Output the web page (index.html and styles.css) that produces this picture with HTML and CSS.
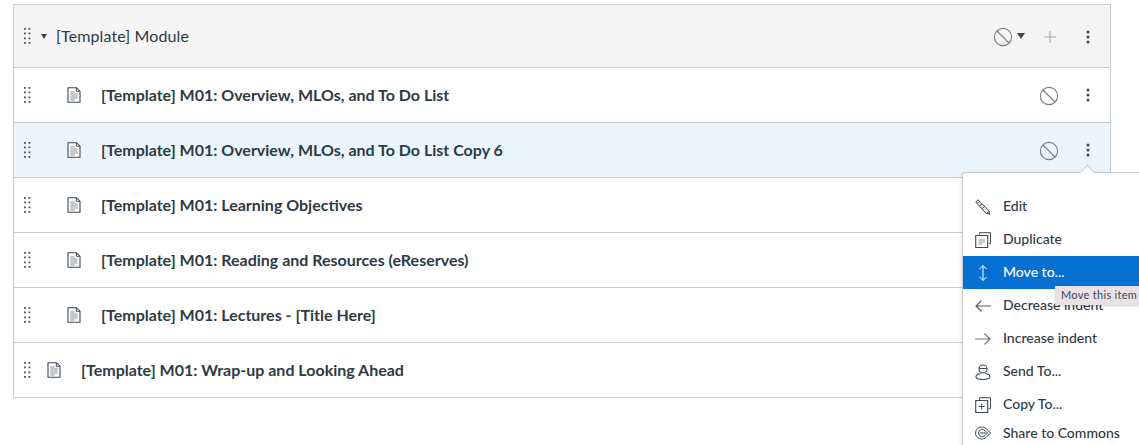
FILE: index.html
```html
<!doctype html>
<html lang="en">
  <head>
    <meta charset="UTF-8" />
    <title>Modules</title>
    <link rel="stylesheet" href="styles.css">
  </head>
  <body>
    <svg class="icon-defs" width="0" height="0">
      <symbol id="i-grip" viewBox="0 0 10 18">
        <g fill="#4a5660">
          <rect x="1" y="1" width="1.8" height="1.8"/><rect x="5.500" y="1" width="1.800" height="1.800"/>
          <rect x="1" y="5.500" width="1.800" height="1.800"/><rect x="5.500" y="5.500" width="1.800" height="1.800"/>
          <rect x="1" y="10.500" width="1.800" height="1.800"/><rect x="5.500" y="10.500" width="1.800" height="1.800"/>
          <rect x="1" y="15" width="1.800" height="1.800"/><rect x="5.500" y="15" width="1.800" height="1.800"/>
        </g>
      </symbol>
      <symbol id="i-page" viewBox="0 0 14 16">
        <path d="M1 .7h8.500L13 4.200v11.100H1z" fill="#fff" stroke="#3d4850" stroke-width="1.100"/>
        <path d="M9.300.9v3.400h3.500" fill="none" stroke="#3d4850"/>
        <path d="M3.200 5h4.500M3.200 7h7.500M3.200 9h7.500M3.200 11h7.500M3.200 13h4.500" stroke="#8a949b" stroke-width="1.100"/>
      </symbol>
      <symbol id="i-off" viewBox="0 0 20 20">
        <circle cx="10" cy="10" r="8.600" fill="none" stroke="#747d85" stroke-width="1.100"/>
        <path d="M4 4l12 12" stroke="#747d85" stroke-width="1.100"/>
      </symbol>
      <symbol id="i-kebab" viewBox="0 0 4 14">
        <circle cx="2" cy="2" r="1.500" fill="#3d4850"/><circle cx="2" cy="7" r="1.500" fill="#3d4850"/><circle cx="2" cy="12" r="1.500" fill="#3d4850"/>
      </symbol>
    </svg>

    <div class="module">
      <div class="module-header">
        <svg class="grip"><use href="#i-grip"/></svg>
        <span class="caret"></span>
        <span class="module-name">[Template] Module</span>
        <div class="header-actions">
          <svg class="off"><use href="#i-off"/></svg>
          <span class="caret caret-dark"></span>
          <svg class="plus" viewBox="0 0 12 12"><path d="M6 0v12M0 6h12" stroke="#a5acb2" stroke-width="1.200"/></svg>
          <svg class="kebab"><use href="#i-kebab"/></svg>
        </div>
      </div>

      <div class="item indent">
        <svg class="grip"><use href="#i-grip"/></svg>
        <svg class="page"><use href="#i-page"/></svg>
        <span class="title">[Template] M01: Overview, MLOs, and To Do List</span>
        <div class="item-actions">
          <svg class="off"><use href="#i-off"/></svg>
          <svg class="kebab"><use href="#i-kebab"/></svg>
        </div>
      </div>
      <div class="item indent active">
        <svg class="grip"><use href="#i-grip"/></svg>
        <svg class="page"><use href="#i-page"/></svg>
        <span class="title">[Template] M01: Overview, MLOs, and To Do List Copy 6</span>
        <div class="item-actions">
          <svg class="off"><use href="#i-off"/></svg>
          <svg class="kebab"><use href="#i-kebab"/></svg>
        </div>
      </div>
      <div class="item indent">
        <svg class="grip"><use href="#i-grip"/></svg>
        <svg class="page"><use href="#i-page"/></svg>
        <span class="title">[Template] M01: Learning Objectives</span>
      </div>
      <div class="item indent">
        <svg class="grip"><use href="#i-grip"/></svg>
        <svg class="page"><use href="#i-page"/></svg>
        <span class="title">[Template] M01: Reading and Resources (eReserves)</span>
      </div>
      <div class="item indent">
        <svg class="grip"><use href="#i-grip"/></svg>
        <svg class="page"><use href="#i-page"/></svg>
        <span class="title">[Template] M01: Lectures - [Title Here]</span>
      </div>
      <div class="item">
        <svg class="grip"><use href="#i-grip"/></svg>
        <svg class="page"><use href="#i-page"/></svg>
        <span class="title">[Template] M01: Wrap-up and Looking Ahead</span>
      </div>
    </div>

    <div class="menu">
      <a class="menu-item">
        <svg viewBox="0 0 16 16"><path d="M.8 3L3 .8l10.800 10.700.9 3.700-3.700-.9zM2.300 4.500l2.200-2.200M4.800 7l2.200-2.200M7.300 9.500l2.200-2.200" fill="#e4e7e9" stroke="#3d4850" stroke-width="1"/><path d="M12 14.200l2-2" stroke="#3d4850"/></svg>
        Edit
      </a>
      <a class="menu-item">
        <svg viewBox="0 0 16 16"><path d="M4.500 2.500V.7h11v11h-1.800" fill="none" stroke="#3d4850"/><path d="M.7 3.500h12v12H.7z" fill="#fff" stroke="#3d4850" stroke-width="1.100"/><path d="M3.500 8h6.500M3.500 10h6.500M3.500 12h4" stroke="#8a949b"/></svg>
        Duplicate
      </a>
      <a class="menu-item selected">
        <svg viewBox="0 0 16 16"><path d="M8 .5v15M4.500 4L8 .5 11.500 4M4.500 12L8 15.500l3.500-3.500" fill="none" stroke="#fff" stroke-width="1"/></svg>
        Move to...
      </a>
      <a class="menu-item">
        <svg viewBox="0 0 16 16"><path d="M16 8H.8M6.500 2.500L1 8l5.500 5.500" fill="none" stroke="#4f5a62" stroke-width="1.100"/></svg>
        Decrease indent
      </a>
      <a class="menu-item">
        <svg viewBox="0 0 16 16"><path d="M0 8h15.200M9.500 2.500L15 8l-5.500 5.500" fill="none" stroke="#6b757d" stroke-width="1.100"/></svg>
        Increase indent
      </a>
      <a class="menu-item">
        <svg viewBox="0 0 16 16"><circle cx="8" cy="5" r="4" fill="none" stroke="#3d4850" stroke-width="1.100"/><path d="M4.200 4.500h7.600" stroke="#3d4850"/><path d="M5.500 9.500C2.500 10 1 11.300 1 12.800 1 14.500 3 15.500 8 15.500s7-1 7-2.700c0-1.500-1.500-2.800-4.500-3.300" fill="none" stroke="#3d4850" stroke-width="1.100"/></svg>
        Send To...
      </a>
      <a class="menu-item">
        <svg viewBox="0 0 16 16"><path d="M4.500 2.500V.7h11v11h-1.800" fill="none" stroke="#3d4850"/><path d="M.7 3.500h12v12H.7z" fill="#fff" stroke="#3d4850" stroke-width="1.100"/><path d="M6.700 6.500v6M3.700 9.500h6" stroke="#3d4850"/></svg>
        Copy To...
      </a>
      <a class="menu-item">
        <svg viewBox="0 0 16 16"><path d="M11 3.500C9.500 2.500 8 2 6.500 2A6 6 0 0 0 6.500 14c1.500 0 3-.5 4.500-1.500l4.500-4.500z" fill="none" stroke="#3d4850" stroke-width="1"/><path d="M10 5.500C9 4.800 8 4.500 7 4.500a3.500 3.500 0 0 0 0 7c1 0 2-.3 3-1L12.500 8z" fill="none" stroke="#3d4850" stroke-width="1"/><path d="M5 8h6" stroke="#3d4850"/></svg>
        Share to Commons
      </a>
    </div>
    <div class="tooltip">Move this item</div>
  </body>
</html>
```

FILE: styles.css
```css
html, body { margin: 0; padding: 0; height: 445px; overflow: hidden; background: #fff; color: #2d3b45; font-family: Lato, "Open Sans", sans-serif; }
.icon-defs { position: absolute; }

.module { box-sizing: border-box; width: 1098px; margin: 4px 0 0 13px; border: 1px solid #c7cdd1; }
.module-header { display: flex; align-items: center; height: 62px; padding-left: 9px; background: #f5f5f5; font-size: 16px; }
.module-name { margin: 0 0 2px 9px; letter-spacing: .12px; }
.header-actions, .item-actions { display: flex; align-items: center; margin-left: auto; }

.item { display: flex; align-items: center; box-sizing: border-box; height: 55px; padding-left: 9px; border-top: 1px solid #c7cdd1; font-size: 16px; font-weight: 700; }
.item.active { background: #ebf5fd; }
.title { margin: 0 0 2px 20px; }
.page { width: 14px; height: 16px; margin-left: 14px; flex: none; }
.indent .page { margin-left: 34px; }

.grip { width: 10px; height: 18px; flex: none; margin-top: -1px; }
.caret { width: 0; height: 0; margin-left: 8px; border-left: 3.500px solid transparent; border-right: 3.500px solid transparent; border-top: 5px solid #3d4850; }
.caret-dark { margin: 0 0 0 4px; border-left-width: 4px; border-right-width: 4px; border-top-width: 6px; }

.off { width: 20px; height: 20px; flex: none; margin-top: 1px; }
.kebab { width: 4px; height: 14px; flex: none; margin-left: 27px; margin-right: 20px; }
.plus { width: 12px; height: 12px; flex: none; margin-left: 19px; margin-top: 1px; }
.header-actions .kebab { margin-left: 30px; margin-top: 1px; }

.menu { position: absolute; left: 962px; top: 172px; box-sizing: border-box; width: 177px; height: 273px; padding-top: 17px; background: #fff; border: 1px solid #c7cdd1; border-width: 1px 0 0 1px; border-radius: 3px 0 0 0; box-shadow: 0 2px 5px rgba(0, 0, 0, .15); }
.menu::before { content: ""; position: absolute; left: 119px; top: -6px; width: 10px; height: 10px; background: #fff; border-left: 1px solid #c7cdd1; border-top: 1px solid #c7cdd1; transform: rotate(45deg); }
.menu-item { display: flex; align-items: center; gap: 12px; height: 33px; padding: 0 0 2px 12px; box-sizing: border-box; font-size: 14px; font-weight: 500; color: #2d3b45; }
.menu-item svg { width: 16px; height: 16px; flex: none; margin-top: 2px; }
.menu-item.selected { background: #0770d3; color: #fff; }
.menu-item:last-child { height: 24px; }

.tooltip { position: absolute; left: 1055px; top: 286px; box-sizing: border-box; width: 84px; height: 19px; padding: 2px 0 0 6px; background: #e9e1e6; color: #414a52; font-size: 11px; letter-spacing: .3px; white-space: nowrap; box-shadow: 0 1px 2px rgba(0, 0, 0, .2); }
```
